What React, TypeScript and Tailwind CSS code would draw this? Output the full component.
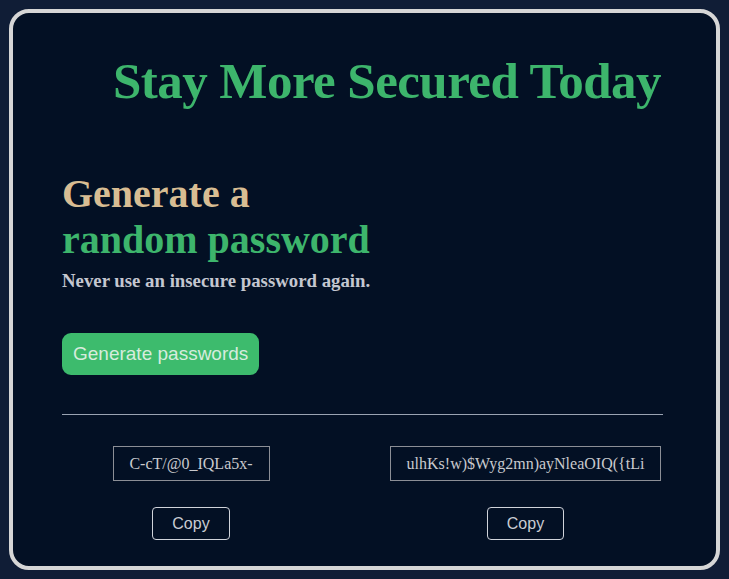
export default function App() {
  const passwords = ["C-cT/@0_IQLa5x-", "ulhKs!w)$Wyg2mn)ayNleaOIQ({tLi"];

  return (
    <div className="min-h-screen w-full bg-[#101d36] p-[9px]">
      <div className="h-[561px] w-[711px] rounded-[20px] border-4 border-[#d6d6d6] bg-[#031024] pl-[49px] pr-[53px] pt-[43px] font-['Liberation_Serif',serif]">
        <h1 className="whitespace-nowrap pl-[51px] text-[51px] font-bold leading-none tracking-[-0.55px] text-[#3db56c]">
          Stay More Secured Today
        </h1>

        <div className="mt-[64px]">
          <h2 className="text-[40px] font-bold leading-[46px] text-[#d8bd93]">Generate a</h2>
          <h2 className="text-[40px] font-bold leading-[46px] text-[#3db56c]">random password</h2>
          <p className="mt-[4px] text-[18.8px] font-bold text-[#c4c7d0]">Never use an insecure password again.</p>
        </div>

        <button className="mt-[38px] h-[42px] rounded-[9px] bg-[#3dbb6d] px-[11px] font-['Liberation_Sans',sans-serif] text-[19px] text-[#d6ecdd]">
          Generate passwords
        </button>

        <div className="mt-[39px] h-px w-full bg-[#9aa3b2]" />

        <div className="mt-[31px] flex">
          <div className="flex w-[258px] flex-col items-center">
            <div className="flex h-[35px] w-[157px] items-center justify-center border border-[#8c8f96] text-[16px] text-[#c9cace]">
              {passwords[0]}
            </div>
            <button className="mt-[26px] h-[33px] w-[78px] rounded-[4px] border border-[#d0d3da] font-['Liberation_Sans',sans-serif] text-[16px] text-[#c9ccd3]">
              Copy
            </button>
          </div>
          <div className="ml-[70px] flex flex-col items-center">
            <div className="flex h-[35px] w-[271px] items-center justify-center border border-[#8c8f96] text-[16px] text-[#c9cace]">
              {passwords[1]}
            </div>
            <button className="mt-[26px] h-[33px] w-[77px] rounded-[4px] border border-[#d0d3da] font-['Liberation_Sans',sans-serif] text-[16px] text-[#c9ccd3]">
              Copy
            </button>
          </div>
        </div>
      </div>
    </div>
  );
}
